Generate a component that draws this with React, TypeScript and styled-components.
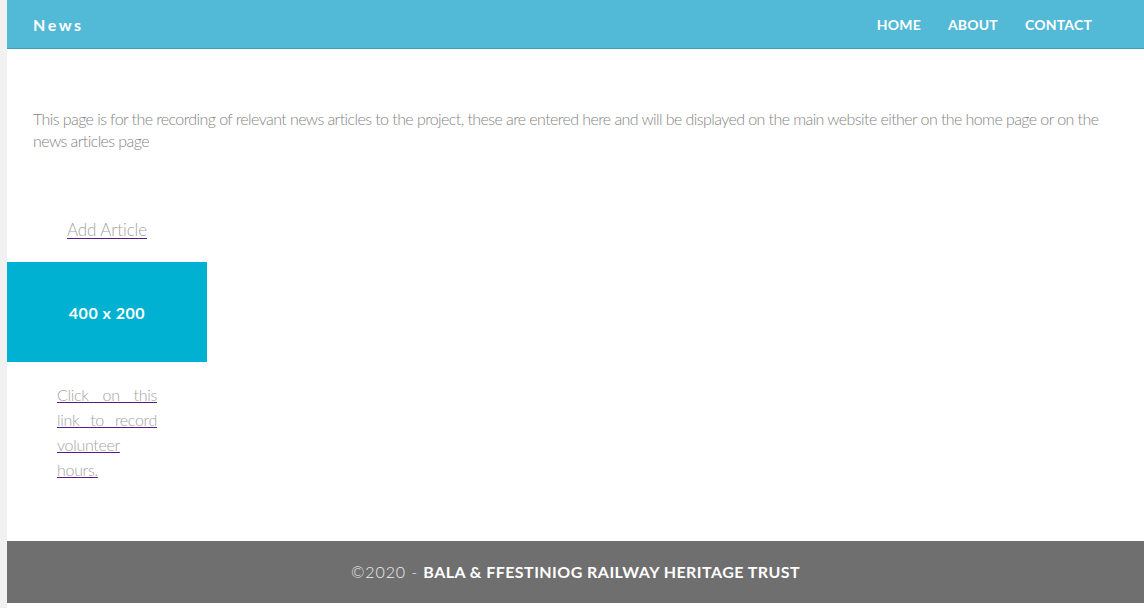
import React from "react";
import styled, { createGlobalStyle } from "styled-components";

const Global = createGlobalStyle`
  html, body { margin: 0; padding: 0; }
  body {
    background: #f1f1f1;
    font-family: "Lato", "Open Sans", sans-serif;
  }
`;

const Page = styled.div`
  margin-left: 7px;
  min-height: 608px;
  background: #ffffff;
  display: flex;
  flex-direction: column;
`;

const Header = styled.header`
  height: 48px;
  border-bottom: 1px solid #3d9fbb;
  background: #52b9d6;
  display: flex;
  align-items: center;
  justify-content: space-between;
  padding: 0 52px 0 26px;
  color: #ffffff;
`;

const Brand = styled.div`
  font-size: 16px;
  font-weight: 700;
  letter-spacing: 2.6px;
`;

const Nav = styled.nav`
  display: flex;
  gap: 27px;
`;

const NavLink = styled.a`
  color: #ffffff;
  text-decoration: none;
  font-size: 14px;
  font-weight: 700;
  letter-spacing: 0.2px;
`;

const Main = styled.main`
  flex: 1;
  display: flex;
  flex-direction: column;
  padding-top: 59px;
`;

const Intro = styled.p`
  margin: 0;
  padding: 0 26px;
  font-size: 16px;
  line-height: 22px;
  font-weight: 300;
  letter-spacing: -0.58px;
  color: #858585;
`;

const Card = styled.div`
  width: 200px;
  margin-top: 66px;
  display: flex;
  flex-direction: column;
  align-items: center;
`;

const AddLink = styled.a`
  font-size: 17px;
  line-height: 24px;
  font-weight: 300;
  letter-spacing: -0.1px;
  color: #a3a3a3;
  text-decoration: underline;
  text-decoration-color: #551a8b;
  text-underline-offset: 2px;
`;

const Placeholder = styled.div`
  margin-top: 20px;
  width: 200px;
  height: 100px;
  background: #00b1d2;
  color: #ffffff;
  display: flex;
  align-items: center;
  justify-content: center;
  font-size: 16px;
  font-weight: 700;
  letter-spacing: 0.5px;
`;

const HoursText = styled.p`
  margin: 20px 0 0;
  width: 100px;
  font-size: 16px;
  line-height: 25px;
  font-weight: 300;
  letter-spacing: -0.3px;
  text-align: justify;
`;

const HoursLink = styled.a`
  color: #a3a3a3;
  text-decoration: underline;
  text-decoration-color: #551a8b;
`;

const Footer = styled.footer`
  margin-top: 58px;
  height: 62px;
  background: #6f6f6f;
  display: flex;
  align-items: center;
  justify-content: center;
  color: #ffffff;
  font-size: 16px;
  letter-spacing: 0.45px;
  margin-bottom: 5px;
  padding-bottom: 2px;
  box-sizing: border-box;
`;

const Light = styled.span`
  font-weight: 300;
  color: #eeeeee;
  white-space: pre;
  letter-spacing: 0.9px;
`;

const Strong = styled.span`
  font-weight: 700;
`;

export default function App() {
  return (
    <>
      <Global />
      <Page>
        <Header>
          <Brand>News</Brand>
          <Nav>
            <NavLink href="#">HOME</NavLink>
            <NavLink href="#">ABOUT</NavLink>
            <NavLink href="#">CONTACT</NavLink>
          </Nav>
        </Header>
        <Main>
          <Intro>
            This page is for the recording of relevant news articles to the project, these are entered here and will be
            displayed on the main website either on the home page or on the news articles page
          </Intro>
          <Card>
            <AddLink href="#">Add Article</AddLink>
            <Placeholder>400 x 200</Placeholder>
            <HoursText>
              <HoursLink href="#">Click on this link to record volunteer hours.</HoursLink>
            </HoursText>
          </Card>
        </Main>
        <Footer>
          <Light>©2020 - </Light>
          <Strong>BALA &amp; FFESTINIOG RAILWAY HERITAGE TRUST</Strong>
        </Footer>
      </Page>
    </>
  );
}
